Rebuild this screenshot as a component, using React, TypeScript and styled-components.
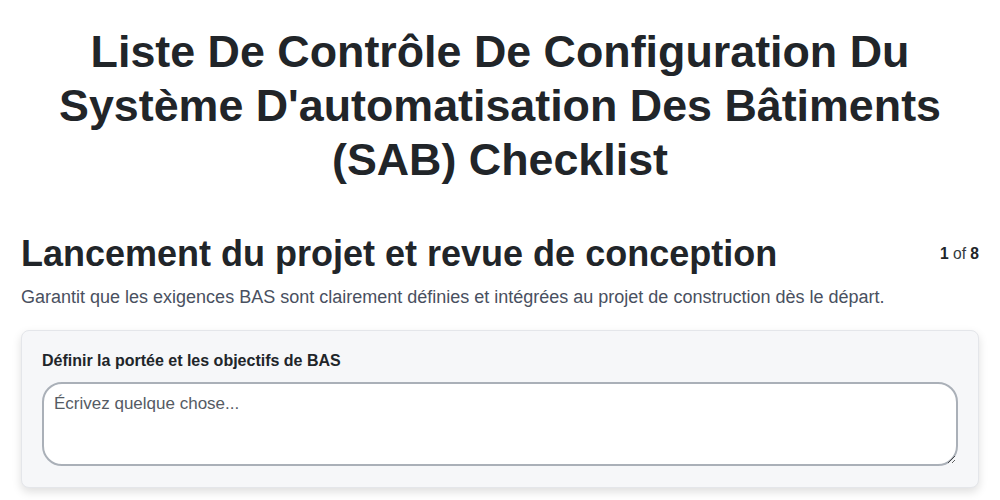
import React from "react";
import styled, { createGlobalStyle } from "styled-components";

const Global = createGlobalStyle`
  html, body { margin: 0; padding: 0; background: #ffffff; }
  body { font-family: "Liberation Sans", Arial, sans-serif; color: #212529; }
  * { box-sizing: border-box; }
`;

const Page = styled.div`
  display: flex;
  flex-direction: column;
  padding: 24px 21px 12px 21px;
`;

const Title = styled.h1`
  margin: 0 auto;
  max-width: 900px;
  text-align: center;
  font-size: 44.8px;
  line-height: 54px;
  font-weight: 700;
  color: #212529;
`;

const SectionHeader = styled.div`
  display: flex;
  justify-content: space-between;
  align-items: center;
  margin-top: 46px;
`;

const SectionTitle = styled.h2`
  margin: 0;
  font-size: 36px;
  line-height: 44px;
  font-weight: 700;
  color: #212529;
`;

const Counter = styled.div`
  font-size: 15.6px;
  color: #343a40;
  b { font-weight: 700; color: #212529; }
`;

const Description = styled.p`
  margin: 10px 0 0 0;
  font-size: 18px;
  line-height: 22px;
  color: #495060;
`;

const Card = styled.div`
  margin-top: 22px;
  background: #f6f7f9;
  border: 1px solid #e4e6ea;
  border-radius: 8px;
  box-shadow: 0 4px 10px rgba(0, 0, 0, 0.13);
  padding: 20px 20px 21px 20px;
  display: flex;
  flex-direction: column;
`;

const Label = styled.label`
  font-size: 16px;
  line-height: 20px;
  font-weight: 700;
  color: #212529;
  margin-bottom: 11px;
`;

const TextArea = styled.textarea`
  width: 100%;
  height: 84px;
  border: 2px solid #aab0b8;
  border-radius: 20px;
  background: #ffffff;
  padding: 10px 10px;
  font-family: "Liberation Sans", Arial, sans-serif;
  font-size: 17px;
  line-height: 20px;
  color: #212529;
  outline: none;
  &::placeholder { color: #555b64; }
`;

export default function App() {
  return (
    <>
      <Global />
      <Page>
        <Title>
          Liste De Contrôle De Configuration Du Système D'automatisation Des Bâtiments (SAB) Checklist
        </Title>
        <SectionHeader>
          <SectionTitle>Lancement du projet et revue de conception</SectionTitle>
          <Counter>
            <b>1</b> of <b>8</b>
          </Counter>
        </SectionHeader>
        <Description>
          Garantit que les exigences BAS sont clairement définies et intégrées au projet de construction dès le départ.
        </Description>
        <Card>
          <Label>Définir la portée et les objectifs de BAS</Label>
          <TextArea placeholder="Écrivez quelque chose..." />
        </Card>
      </Page>
    </>
  );
}
